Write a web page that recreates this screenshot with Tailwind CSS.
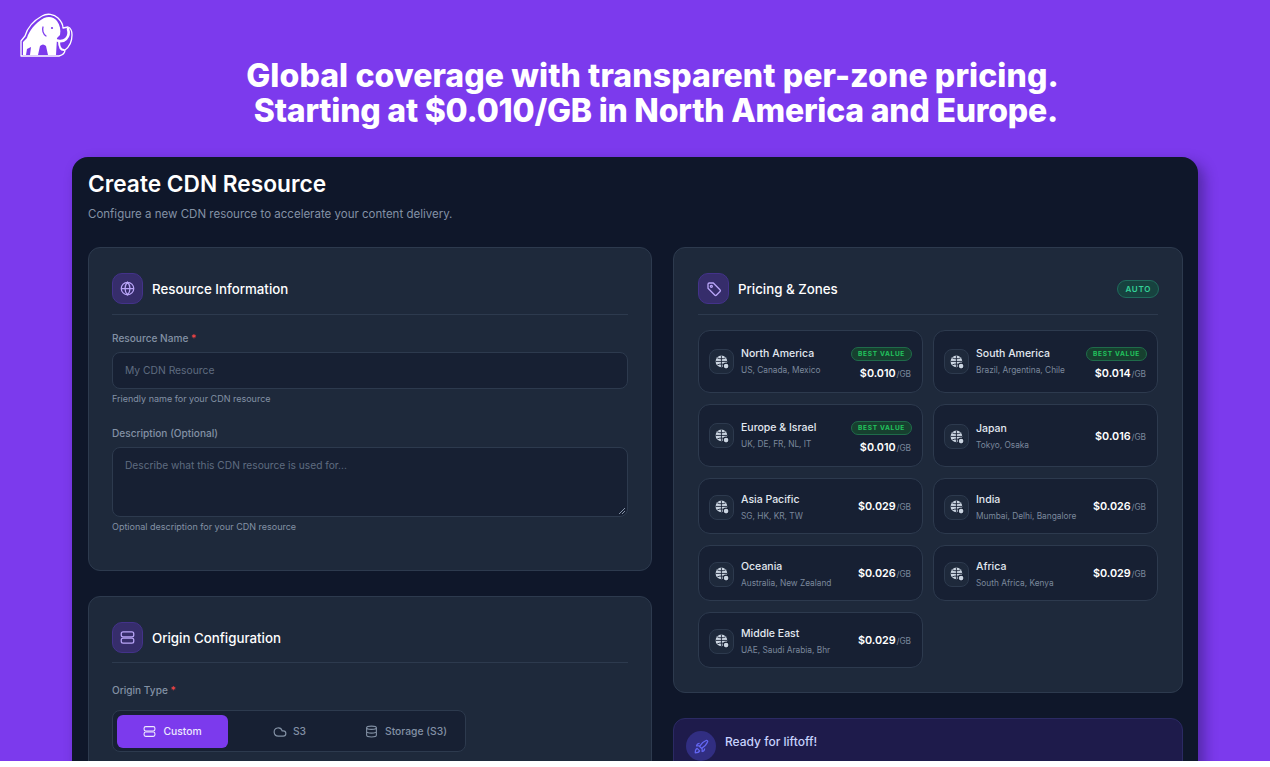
<!doctype html>
<html lang="en">
<head>
    <title>Create CDN Resource</title>
    <meta charset="UTF-8">
    <meta name="viewport" content="width=device-width, initial-scale=1.0">
    <script src="https://cdn.jsdelivr.net/npm/@tailwindcss/browser@4"></script>
</head>
<body class="bg-white font-['Inter',sans-serif]">
<main class="relative h-[761px] overflow-hidden bg-[#7c3aed]">

    <!-- Logo -->
    <svg class="absolute left-[19px] top-[13px]" width="54" height="45" viewBox="0 0 54 45" fill="none">
        <path d="M2 43V28L6 23C8 16 14 8 23 3C28 0 35 1 39 5C42 8 44 12 44 15L49 14C52 15 53 18 53 22C53 29 50 34 46 37C46 40 44 42 40 43Z" stroke="#fff" stroke-width="1.300" stroke-linejoin="round"/>
        <path d="M4 42V29L8 25C10 18 16 10 25 5C30 3 35 4 38 8C41 12 42 17 41 22L38 25L37 42H29L27 33C25 31 23 31 21 33L19 42H11L12 34L8 36L7 42Z" fill="#fff"/>
        <path d="M24 14C23 17 24 21 27 23" stroke="#7c3aed" stroke-width="1.300" stroke-linecap="round"/>
        <circle cx="33" cy="15" r="1.100" fill="#7c3aed"/>
        <path d="M33 25C38 29 44 29 47 26C50 23 50 19 49 16" stroke="#fff" stroke-width="2.600" stroke-linecap="round"/>
        <path d="M40 28C40 33 41 37 45 37" stroke="#fff" stroke-width="2" stroke-linecap="round"/>
    </svg>

    <!-- Headline -->
    <h1 class="pt-[58px] pl-[35px] text-center text-[32px] leading-[35px] font-extrabold text-white">
        <span class="tracking-[0.1px]">Global coverage with transparent per-zone pricing.</span><br><span class="tracking-[-0.22px]">&nbsp;Starting at $0.010/GB in North America and Europe.</span>
    </h1>

    <!-- Panel -->
    <div class="absolute left-[72px] top-[157px] w-[1126px] h-[640px] rounded-2xl bg-[#0f172a] py-4 pl-4 pr-[15px] shadow-[6px_6px_14px_rgba(30,20,80,0.45)]">
        <h2 class="text-[22.700px] leading-[32px] -mt-[5px] font-semibold text-white">Create CDN Resource</h2>
        <p class="mt-[4px] text-[11.500px] leading-[20px] text-[#8391a5]">Configure a new CDN resource to accelerate your content delivery.</p>

        <div class="mt-[23px] flex gap-[21px] items-start">

            <!-- Left column -->
            <div class="w-[564px] shrink-0 flex flex-col gap-[25px]">

                <section class="h-[324px] rounded-xl border border-[#2d3a4e] bg-[#1e293b] px-[23px] pt-[25px]">
                    <div class="flex items-center gap-[9px] border-b border-[#2d3a4e] pb-[10px]">
                        <div class="flex h-[31px] w-[31px] items-center justify-center rounded-[10px] border border-[#43328a] bg-[#362d6b]">
                            <svg width="15" height="15" viewBox="0 0 24 24" fill="none" stroke="#b9a5f8" stroke-width="2"><circle cx="12" cy="12" r="10"/><path d="M2 12h20M12 2c3 3 4 6 4 10s-1 7-4 10c-3-3-4-6-4-10s1-7 4-10z"/></svg>
                        </div>
                        <h3 class="mt-[2px] text-[13.300px] font-medium text-white">Resource Information</h3>
                    </div>
                    <label class="mt-[15px] block text-[10.100px] leading-[16px] font-medium text-[#8391a5]">Resource Name <span class="text-[#ef4444]">*</span></label>
                    <div class="mt-[6px] flex h-[37px] items-center rounded-lg border border-[#2d3a4e] bg-[#172033] px-3 pt-[1px] text-[10.300px] text-[#5f6c80]">My CDN Resource</div>
                    <p class="mt-[3px] text-[9px] leading-[14px] text-[#8391a5]">Friendly name for your CDN resource</p>
                    <label class="mt-[19px] block text-[10.100px] leading-[16px] font-medium text-[#8391a5]">Description (Optional)</label>
                    <div class="relative mt-[6px] h-[70px] rounded-lg border border-[#2d3a4e] bg-[#172033] px-3 pt-[9px] text-[10.200px] leading-[16px] text-[#5f6c80]">
                        Describe what this CDN resource is used for...
                        <svg class="absolute bottom-[1px] right-[1px]" width="8" height="8" viewBox="0 0 8 8" stroke="#8391a5"><path d="M1 7L7 1M4 7L7 4"/></svg>
                    </div>
                    <p class="mt-[3px] text-[9px] leading-[14px] text-[#8391a5]">Optional description for your CDN resource</p>
                </section>

                <section class="h-[300px] rounded-xl border border-[#2d3a4e] bg-[#1e293b] px-[23px] pt-[25px]">
                    <div class="flex items-center gap-[9px] border-b border-[#2d3a4e] pb-[9px]">
                        <div class="flex h-[31px] w-[31px] items-center justify-center rounded-[10px] border border-[#43328a] bg-[#362d6b]">
                            <svg width="15" height="15" viewBox="0 0 24 24" fill="none" stroke="#b9a5f8" stroke-width="2"><rect x="2" y="3" width="20" height="8" rx="3"/><rect x="2" y="13" width="20" height="8" rx="3"/></svg>
                        </div>
                        <h3 class="mt-[2px] text-[13.300px] font-medium text-white">Origin Configuration</h3>
                    </div>
                    <label class="mt-[19px] block text-[10.100px] leading-[16px] font-medium text-[#8391a5]">Origin Type <span class="text-[#ef4444]">*</span></label>
                    <div class="mt-[12px] flex h-[42px] w-[354px] items-center rounded-lg border border-[#2d3a4e] bg-[#172033] p-1">
                        <div class="flex h-[33px] w-[111px] items-center justify-center gap-[7px] rounded-md bg-[#7c3aed] pt-[1px] text-[10.300px] font-medium text-[#ede9fe]">
                            <svg width="13" height="13" viewBox="0 0 24 24" fill="none" stroke="#ede9fe" stroke-width="2"><rect x="2" y="3" width="20" height="8" rx="3"/><rect x="2" y="13" width="20" height="8" rx="3"/></svg>
                            Custom
                        </div>
                        <div class="flex h-[33px] w-[123px] items-center justify-center gap-[6px] pt-[1px] text-[10.300px] font-medium text-[#8391a5]">
                            <svg width="14" height="14" viewBox="0 0 24 24" fill="none" stroke="#8391a5" stroke-width="2"><path d="M17.500 19H9a7 7 0 1 1 6.700-9h1.800a4.500 4.500 0 1 1 0 9z"/></svg>
                            S3
                        </div>
                        <div class="flex h-[33px] w-[110px] items-center justify-center gap-[7px] pt-[1px] text-[10.300px] font-medium text-[#8391a5]">
                            <svg width="13" height="13" viewBox="0 0 24 24" fill="none" stroke="#8391a5" stroke-width="2"><ellipse cx="12" cy="5" rx="9" ry="3"/><path d="M3 5v14c0 1.700 4 3 9 3s9-1.300 9-3V5M3 12c0 1.700 4 3 9 3s9-1.300 9-3"/></svg>
                            Storage (S3)
                        </div>
                    </div>
                </section>
            </div>

            <!-- Right column -->
            <div class="w-[510px] shrink-0 flex flex-col gap-[25px]">

                <section class="h-[446px] rounded-xl border border-[#2d3a4e] bg-[#1e293b] px-6 pt-[25px]">
                    <div class="flex items-center gap-[9px] border-b border-[#2d3a4e] pb-[10px]">
                        <div class="flex h-[31px] w-[31px] items-center justify-center rounded-[10px] border border-[#43328a] bg-[#362d6b]">
                            <svg width="16" height="16" viewBox="0 0 24 24" fill="none" stroke="#b9a5f8" stroke-width="2" stroke-linejoin="round"><path d="M3 5a2 2 0 0 1 2-2h6l10 10a2 2 0 0 1 0 2.800l-5.200 5.200a2 2 0 0 1-2.800 0L3 11z"/><circle cx="8" cy="8" r="1.500"/></svg>
                        </div>
                        <h3 class="mt-[2px] text-[13.300px] font-medium text-white">Pricing &amp; Zones</h3>
                        <span class="ml-auto -mr-[1px] rounded-full border border-[#1f6b5c] bg-[#17423f] px-[7px] py-[1px] text-[8px] leading-[14px] font-semibold tracking-[0.7px] text-[#34d399]">AUTO</span>
                    </div>

                    <div class="mt-[15px] grid grid-cols-2 gap-x-[10px] gap-y-[11px]">

                        <div class="flex h-[63px] items-center rounded-xl border border-[#2d3a4e] bg-[#172033] pl-[10px] pr-[11px]">
                            <div class="flex h-[25px] w-[25px] shrink-0 items-center justify-center rounded-lg border border-[#2d3a4e] bg-[#1e293b]"><svg width="14" height="14" viewBox="0 0 24 24" fill="#cbd5e1"><circle cx="11" cy="11" r="10"/><path d="M1 11h20M11 1v20M4 5c4 2 10 2 14 0M4 17c4-2 10-2 14 0" stroke="#172033" stroke-width="1.500" fill="none"/><circle cx="19" cy="19" r="5" stroke="#172033" stroke-width="2"/></svg></div>
                            <div class="ml-[7px] min-w-0 -mt-[1px]"><p class="text-[10.500px] leading-[16px] font-medium text-[#e2e8f0]">North America</p><p class="mt-[2px] text-[8.300px] leading-[13px] text-[#7b889c] whitespace-nowrap">US, Canada, Mexico</p></div>
                            <div class="ml-auto flex flex-col items-end gap-[5px] pt-[6px]"><span class="-mr-[1px] rounded-full border border-[#1f6b4a] bg-[#17402f] px-[6px] text-[6.500px] leading-[12px] font-bold tracking-[0.7px] text-[#22c55e]">BEST VALUE</span><p class="text-[10.800px] leading-[16px] font-semibold text-white">$0.010 <span class="-ml-[2px] text-[8.300px] font-normal text-[#7b889c]">/GB</span></p></div>
                        </div>

                        <div class="flex h-[63px] items-center rounded-xl border border-[#2d3a4e] bg-[#172033] pl-[10px] pr-[11px]">
                            <div class="flex h-[25px] w-[25px] shrink-0 items-center justify-center rounded-lg border border-[#2d3a4e] bg-[#1e293b]"><svg width="14" height="14" viewBox="0 0 24 24" fill="#cbd5e1"><circle cx="11" cy="11" r="10"/><path d="M1 11h20M11 1v20M4 5c4 2 10 2 14 0M4 17c4-2 10-2 14 0" stroke="#172033" stroke-width="1.500" fill="none"/><circle cx="19" cy="19" r="5" stroke="#172033" stroke-width="2"/></svg></div>
                            <div class="ml-[7px] min-w-0 -mt-[1px]"><p class="text-[10.500px] leading-[16px] font-medium text-[#e2e8f0]">South America</p><p class="mt-[2px] text-[8.300px] leading-[13px] text-[#7b889c] whitespace-nowrap">Brazil, Argentina, Chile</p></div>
                            <div class="ml-auto flex flex-col items-end gap-[5px] pt-[6px]"><span class="-mr-[1px] rounded-full border border-[#1f6b4a] bg-[#17402f] px-[6px] text-[6.500px] leading-[12px] font-bold tracking-[0.7px] text-[#22c55e]">BEST VALUE</span><p class="text-[10.800px] leading-[16px] font-semibold text-white">$0.014 <span class="-ml-[2px] text-[8.300px] font-normal text-[#7b889c]">/GB</span></p></div>
                        </div>

                        <div class="flex h-[63px] items-center rounded-xl border border-[#2d3a4e] bg-[#172033] pl-[10px] pr-[11px]">
                            <div class="flex h-[25px] w-[25px] shrink-0 items-center justify-center rounded-lg border border-[#2d3a4e] bg-[#1e293b]"><svg width="14" height="14" viewBox="0 0 24 24" fill="#cbd5e1"><circle cx="11" cy="11" r="10"/><path d="M1 11h20M11 1v20M4 5c4 2 10 2 14 0M4 17c4-2 10-2 14 0" stroke="#172033" stroke-width="1.500" fill="none"/><circle cx="19" cy="19" r="5" stroke="#172033" stroke-width="2"/></svg></div>
                            <div class="ml-[7px] min-w-0 -mt-[1px]"><p class="text-[10.500px] leading-[16px] font-medium text-[#e2e8f0]">Europe &amp; Israel</p><p class="mt-[2px] text-[8.300px] leading-[13px] text-[#7b889c] whitespace-nowrap">UK, DE, FR, NL, IT</p></div>
                            <div class="ml-auto flex flex-col items-end gap-[5px] pt-[6px]"><span class="-mr-[1px] rounded-full border border-[#1f6b4a] bg-[#17402f] px-[6px] text-[6.500px] leading-[12px] font-bold tracking-[0.7px] text-[#22c55e]">BEST VALUE</span><p class="text-[10.800px] leading-[16px] font-semibold text-white">$0.010 <span class="-ml-[2px] text-[8.300px] font-normal text-[#7b889c]">/GB</span></p></div>
                        </div>

                        <div class="flex h-[63px] items-center rounded-xl border border-[#2d3a4e] bg-[#172033] pl-[10px] pr-[11px] pt-[2px]">
                            <div class="flex h-[25px] w-[25px] shrink-0 items-center justify-center rounded-lg border border-[#2d3a4e] bg-[#1e293b]"><svg width="14" height="14" viewBox="0 0 24 24" fill="#cbd5e1"><circle cx="11" cy="11" r="10"/><path d="M1 11h20M11 1v20M4 5c4 2 10 2 14 0M4 17c4-2 10-2 14 0" stroke="#172033" stroke-width="1.500" fill="none"/><circle cx="19" cy="19" r="5" stroke="#172033" stroke-width="2"/></svg></div>
                            <div class="ml-[7px] min-w-0"><p class="text-[10.500px] leading-[16px] font-medium text-[#e2e8f0]">Japan</p><p class="mt-[2px] text-[8.300px] leading-[13px] text-[#7b889c] whitespace-nowrap">Tokyo, Osaka</p></div>
                            <p class="ml-auto text-[10.800px] leading-[16px] font-semibold text-white">$0.016 <span class="-ml-[2px] text-[8.300px] font-normal text-[#7b889c]">/GB</span></p>
                        </div>

                        <div class="flex h-[56px] items-center rounded-xl border border-[#2d3a4e] bg-[#172033] pl-[10px] pr-[11px] pt-[2px]">
                            <div class="flex h-[25px] w-[25px] shrink-0 items-center justify-center rounded-lg border border-[#2d3a4e] bg-[#1e293b]"><svg width="14" height="14" viewBox="0 0 24 24" fill="#cbd5e1"><circle cx="11" cy="11" r="10"/><path d="M1 11h20M11 1v20M4 5c4 2 10 2 14 0M4 17c4-2 10-2 14 0" stroke="#172033" stroke-width="1.500" fill="none"/><circle cx="19" cy="19" r="5" stroke="#172033" stroke-width="2"/></svg></div>
                            <div class="ml-[7px] min-w-0"><p class="text-[10.500px] leading-[16px] font-medium text-[#e2e8f0]">Asia Pacific</p><p class="mt-[2px] text-[8.300px] leading-[13px] text-[#7b889c] whitespace-nowrap">SG, HK, KR, TW</p></div>
                            <p class="ml-auto text-[10.800px] leading-[16px] font-semibold text-white">$0.029 <span class="-ml-[2px] text-[8.300px] font-normal text-[#7b889c]">/GB</span></p>
                        </div>

                        <div class="flex h-[56px] items-center rounded-xl border border-[#2d3a4e] bg-[#172033] pl-[10px] pr-[11px] pt-[2px]">
                            <div class="flex h-[25px] w-[25px] shrink-0 items-center justify-center rounded-lg border border-[#2d3a4e] bg-[#1e293b]"><svg width="14" height="14" viewBox="0 0 24 24" fill="#cbd5e1"><circle cx="11" cy="11" r="10"/><path d="M1 11h20M11 1v20M4 5c4 2 10 2 14 0M4 17c4-2 10-2 14 0" stroke="#172033" stroke-width="1.500" fill="none"/><circle cx="19" cy="19" r="5" stroke="#172033" stroke-width="2"/></svg></div>
                            <div class="ml-[7px] min-w-0"><p class="text-[10.500px] leading-[16px] font-medium text-[#e2e8f0]">India</p><p class="mt-[2px] text-[8.300px] leading-[13px] text-[#7b889c] whitespace-nowrap">Mumbai, Delhi, Bangalore</p></div>
                            <p class="ml-auto text-[10.800px] leading-[16px] font-semibold text-white">$0.026 <span class="-ml-[2px] text-[8.300px] font-normal text-[#7b889c]">/GB</span></p>
                        </div>

                        <div class="flex h-[56px] items-center rounded-xl border border-[#2d3a4e] bg-[#172033] pl-[10px] pr-[11px] pt-[2px]">
                            <div class="flex h-[25px] w-[25px] shrink-0 items-center justify-center rounded-lg border border-[#2d3a4e] bg-[#1e293b]"><svg width="14" height="14" viewBox="0 0 24 24" fill="#cbd5e1"><circle cx="11" cy="11" r="10"/><path d="M1 11h20M11 1v20M4 5c4 2 10 2 14 0M4 17c4-2 10-2 14 0" stroke="#172033" stroke-width="1.500" fill="none"/><circle cx="19" cy="19" r="5" stroke="#172033" stroke-width="2"/></svg></div>
                            <div class="ml-[7px] min-w-0"><p class="text-[10.500px] leading-[16px] font-medium text-[#e2e8f0]">Oceania</p><p class="mt-[2px] text-[8.300px] leading-[13px] text-[#7b889c] whitespace-nowrap">Australia, New Zealand</p></div>
                            <p class="ml-auto text-[10.800px] leading-[16px] font-semibold text-white">$0.026 <span class="-ml-[2px] text-[8.300px] font-normal text-[#7b889c]">/GB</span></p>
                        </div>

                        <div class="flex h-[56px] items-center rounded-xl border border-[#2d3a4e] bg-[#172033] pl-[10px] pr-[11px] pt-[2px]">
                            <div class="flex h-[25px] w-[25px] shrink-0 items-center justify-center rounded-lg border border-[#2d3a4e] bg-[#1e293b]"><svg width="14" height="14" viewBox="0 0 24 24" fill="#cbd5e1"><circle cx="11" cy="11" r="10"/><path d="M1 11h20M11 1v20M4 5c4 2 10 2 14 0M4 17c4-2 10-2 14 0" stroke="#172033" stroke-width="1.500" fill="none"/><circle cx="19" cy="19" r="5" stroke="#172033" stroke-width="2"/></svg></div>
                            <div class="ml-[7px] min-w-0"><p class="text-[10.500px] leading-[16px] font-medium text-[#e2e8f0]">Africa</p><p class="mt-[2px] text-[8.300px] leading-[13px] text-[#7b889c] whitespace-nowrap">South Africa, Kenya</p></div>
                            <p class="ml-auto text-[10.800px] leading-[16px] font-semibold text-white">$0.029 <span class="-ml-[2px] text-[8.300px] font-normal text-[#7b889c]">/GB</span></p>
                        </div>

                        <div class="flex h-[56px] items-center rounded-xl border border-[#2d3a4e] bg-[#172033] pl-[10px] pr-[11px] pt-[2px]">
                            <div class="flex h-[25px] w-[25px] shrink-0 items-center justify-center rounded-lg border border-[#2d3a4e] bg-[#1e293b]"><svg width="14" height="14" viewBox="0 0 24 24" fill="#cbd5e1"><circle cx="11" cy="11" r="10"/><path d="M1 11h20M11 1v20M4 5c4 2 10 2 14 0M4 17c4-2 10-2 14 0" stroke="#172033" stroke-width="1.500" fill="none"/><circle cx="19" cy="19" r="5" stroke="#172033" stroke-width="2"/></svg></div>
                            <div class="ml-[7px] min-w-0"><p class="text-[10.500px] leading-[16px] font-medium text-[#e2e8f0]">Middle East</p><p class="mt-[2px] text-[8.300px] leading-[13px] text-[#7b889c] whitespace-nowrap">UAE, Saudi Arabia, Bhr</p></div>
                            <p class="ml-auto text-[10.800px] leading-[16px] font-semibold text-white">$0.029 <span class="-ml-[2px] text-[8.300px] font-normal text-[#7b889c]">/GB</span></p>
                        </div>
                    </div>
                </section>

                <section class="h-[120px] rounded-xl border border-[#2b2a63] bg-[#1e1b4b] px-3 pt-[12px] flex items-start gap-[9px]">
                    <div class="flex h-[30px] w-[30px] items-center justify-center rounded-full bg-[#312e81]">
                        <svg width="15" height="15" viewBox="0 0 24 24" fill="none" stroke="#6366f1" stroke-width="2" stroke-linejoin="round"><path d="M5 15c-2 1-3 4-3 7 3 0 6-1 7-3zM9 12a22 22 0 0 1 11-10c1 0 2 1 2 2a22 22 0 0 1-10 11zM9 11H4s1-4 5-4M13 15v5s4-1 4-5"/></svg>
                    </div>
                    <p class="mt-[1px] text-[12px] leading-[20px] font-medium text-[#c7d2fe]">Ready for liftoff!</p>
                </section>
            </div>
        </div>
    </div>
</main>
</body>
</html>
